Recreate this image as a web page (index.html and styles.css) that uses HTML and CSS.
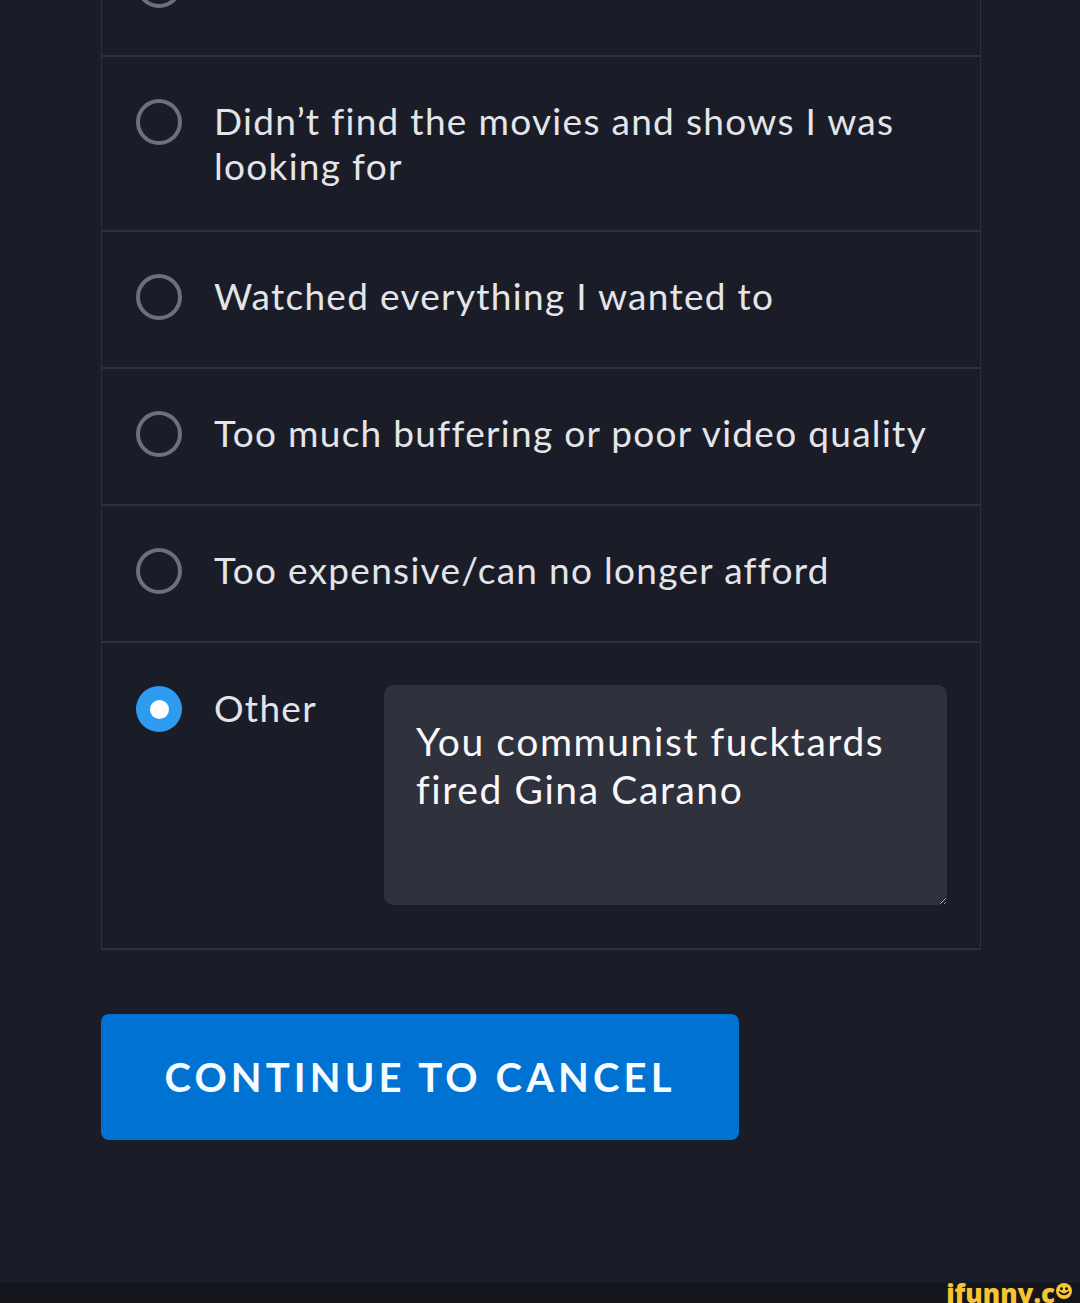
FILE: index.html
```html
<!DOCTYPE html>
<html lang="en">
<head>
    <meta charset="UTF-8">
    <meta name="viewport" content="width=device-width, initial-scale=1.0">
    <title>Cancel Subscription</title>
    <link rel="stylesheet" href="styles.css">
</head>
<body>
    <div class="page">
        <div class="options">
            <!-- scrolled past: only the bottom of its radio shows -->
            <div class="option option-hidden">
                <span class="radio"></span>
            </div>
            <label class="option">
                <span class="radio"></span>
                <span class="option-text">Didn’t find the movies and shows I was looking for</span>
            </label>
            <label class="option">
                <span class="radio"></span>
                <span class="option-text">Watched everything I wanted to</span>
            </label>
            <label class="option">
                <span class="radio"></span>
                <span class="option-text">Too much buffering or poor video quality</span>
            </label>
            <label class="option">
                <span class="radio"></span>
                <span class="option-text">Too expensive/can no longer afford</span>
            </label>
            <div class="option option-other">
                <span class="radio checked"></span>
                <span class="option-text other-label">Other</span>
                <textarea class="other-input" aria-label="Other reason">You communist fucktards fired Gina Carano</textarea>
            </div>
        </div>
        <button class="continue-btn">CONTINUE TO CANCEL</button>
    </div>
    <div class="watermark">
        <span class="wm-text">ifunny.c</span>
        <svg class="wm-smile" width="16" height="16" viewBox="0 0 22 22">
            <circle cx="11" cy="11" r="11" fill="#f7c531"/>
            <circle cx="7.5" cy="8" r="2" fill="#15161d"/>
            <circle cx="14.5" cy="8" r="2" fill="#15161d"/>
            <path d="M5 12.5 Q11 19 17 12.5" stroke="#15161d" stroke-width="2.4" fill="none" stroke-linecap="round"/>
        </svg>
    </div>
</body>
</html>
```

FILE: styles.css
```css
html, body {
    margin: 0;
    padding: 0;
}
body {
    background: #1a1c27;
    font-family: Lato, "Open Sans", sans-serif;
    color: #e4e5e9;
    width: 1080px;
    height: 1303px;
    overflow: hidden;
    display: flex;
    flex-direction: column;
}
.page {
    flex: 1;
    padding-left: 101px;
}
.options {
    width: 880px;
    box-sizing: border-box;
    border-left: 1px solid #2d303c;
    border-right: 1px solid #2d303c;
    border-bottom: 2px solid #2d303c;
    margin-top: -80px;
}
.option {
    display: flex;
    align-items: flex-start;
    gap: 32px;
    min-height: 137px;
    box-sizing: border-box;
    padding: 42px 30px 42px 34px;
    border-bottom: 2px solid #2d303c;
}
.option:last-child {
    border-bottom: none;
    padding-bottom: 43px;
}
.radio {
    flex: none;
    width: 46px;
    height: 46px;
    box-sizing: border-box;
    border: 4px solid #6c707a;
    border-radius: 50%;
    display: flex;
    align-items: center;
    justify-content: center;
}
.radio.checked {
    border: none;
    background: #2d9bf0;
}
.radio.checked::after {
    content: "";
    width: 19px;
    height: 19px;
    border-radius: 50%;
    background: #ffffff;
}
.option-text {
    font-size: 37px;
    line-height: 45px;
    letter-spacing: 1.3px;
    margin-top: -1px;
}
.other-label {
    width: 138px;
    flex: none;
}
.option-other .radio {
    margin-top: 1px;
}
.option-other .other-label {
    margin-top: 0;
}
.other-input {
    width: 563px;
    height: 220px;
    box-sizing: border-box;
    background: #2f313d;
    border: none;
    border-radius: 10px;
    color: #f8f8f9;
    font-family: Lato, "Open Sans", sans-serif;
    font-size: 39px;
    line-height: 48px;
    letter-spacing: 1.6px;
    padding: 32px 24px 20px 32px;
    outline: none;
    resize: vertical;
}
.continue-btn {
    display: block;
    margin-top: 64px;
    width: 638px;
    height: 126px;
    background: #0072d2;
    border: none;
    border-radius: 8px;
    color: #f5fbff;
    font-family: Lato, "Open Sans", sans-serif;
    font-weight: 700;
    font-size: 40px;
    letter-spacing: 4.1px;
    padding: 0;
    cursor: pointer;
}
.watermark {
    height: 20px;
    background: #15161c;
    display: flex;
    justify-content: flex-end;
    align-items: flex-start;
    padding-right: 8px;
}
.wm-text {
    font-family: "Open Sans", sans-serif;
    font-weight: 800;
    font-size: 26px;
    line-height: 20px;
    color: #f7c531;
    letter-spacing: 0;
    margin-top: 0;
}
.wm-smile {
    margin-top: 0;
    margin-left: 1px;
}
```
